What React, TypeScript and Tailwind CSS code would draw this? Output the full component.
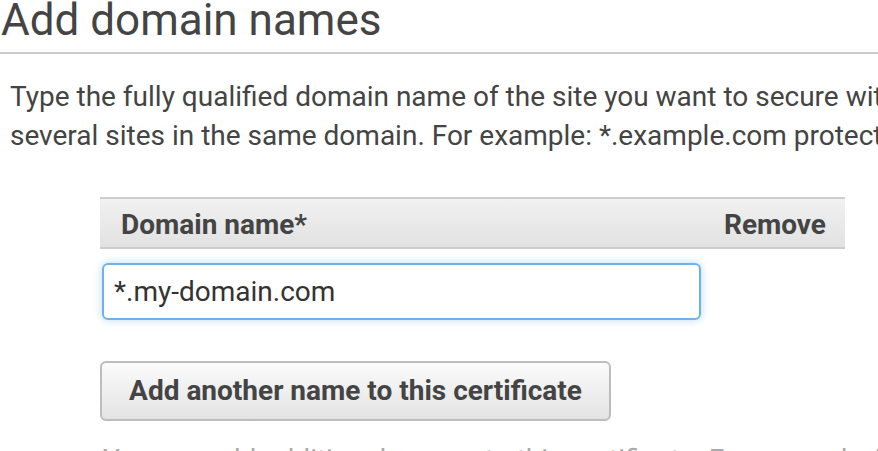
import React, { useState } from 'react'

function App() {
    const [domain, setDomain] = useState('*.my-domain.com')
    const font = { fontFamily: 'Roboto, "Noto Sans", sans-serif' }

    return (
        <div className="bg-white w-[878px] h-[451px] overflow-hidden text-[#444]" style={font}>
            <h1 className="h-[54px] pl-[1px] text-[44px] leading-[39px] pt-[1px] font-normal border-b-2 border-[#c9c9c9] whitespace-nowrap">
                Add domain names
            </h1>
            <p className="mt-[23px] pl-[10px] text-[28px] leading-[39px] whitespace-nowrap">
                Type the fully qualified domain name of the site you want to secure with an SSL/TLS certificate. Use an asterisk (*) to request a wildcard certificate to protect
                <br />
                several sites in the same domain. For example: *.example.com protects www.example.com, site.example.com and images.example.com.
            </p>
            <div className="ml-[100px] mt-[42px] w-[745px]">
                <div className="flex justify-between items-center h-[52px] pt-[3px] px-[21px] border-y-2 border-[#cdcdcd] bg-gradient-to-b from-[#f1f1f1] to-[#e2e2e2] text-[28px] font-bold">
                    <span>Domain name*</span>
                    <span className="mr-[-2px]">Remove</span>
                </div>
                <div className="mt-[14px] ml-[2px]">
                    <input
                        value={domain}
                        onChange={(e) => setDomain(e.target.value)}
                        className="w-[599px] h-[57px] px-[10px] text-[28px] text-[#333] border-2 border-[#6cb2ef] rounded-[6px] shadow-[0_0_8px_rgba(102,175,233,0.45)] outline-none"
                    />
                </div>
                <button className="mt-[41px] w-[511px] h-[60px] rounded-[6px] border-2 border-[#bdbdbd] bg-gradient-to-b from-[#fbfbfb] to-[#e3e3e3] text-[28px] font-bold text-[#444]">
                    Add another name to this certificate
                </button>
            </div>
            <p className="mt-[19px] pl-[103px] text-[28px] leading-[39px] text-[#aaa] whitespace-nowrap">
                You can add additional names to this certificate. For example, if you're requesting a certificate
            </p>
        </div>
    )
}

export default App
